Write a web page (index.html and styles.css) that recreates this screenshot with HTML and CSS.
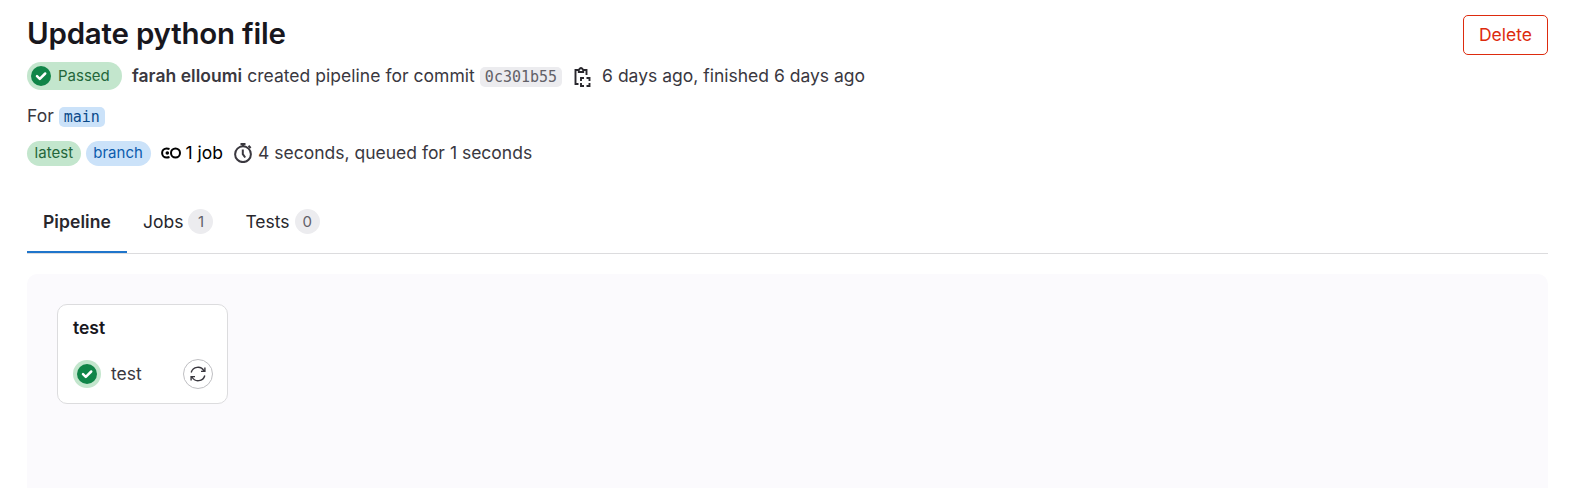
FILE: index.html
```html
<!DOCTYPE html>
<html lang="en">
<head>
<meta charset="utf-8">
<title>Update python file</title>
<link rel="stylesheet" href="styles.css">
</head>
<body>
<main class="page">
  <header class="header">
    <div class="details">
      <h1 class="title">Update python file</h1>
      <div class="meta">
        <span class="status"><svg class="check" viewBox="0 0 20 20"><circle cx="10" cy="10" r="10" fill="#108548"/><path d="M6 10.200l2.800 2.700 5.400-5.400" fill="none" stroke="#fff" stroke-width="2.500" stroke-linecap="round" stroke-linejoin="round"/></svg><span class="status-text">Passed</span></span>
        <span class="created"><strong>farah elloumi</strong> created pipeline for commit</span>
        <code class="sha">0c301b55</code>
        <svg class="copy" viewBox="0 0 20 20" fill="none" stroke="#28272d" stroke-width="1.900"><path d="M6.500 17H3.500V3H6.500M11.500 3H14.500V8"/><path d="M6.800 5V2.800L8 1.500q1-1 2 0L11.200 2.800V5z"/><path d="M9 14V11h3M14.500 11H17.500v3M17.500 16V19h-3M12 19H9v-3"/></svg>
        <span class="when">6 days ago, finished 6 days ago</span>
      </div>
      <div class="ref"><span>For</span><code class="branch-name">main</code></div>
      <div class="stats">
        <span class="badge green">latest</span>
        <span class="badge blue">branch</span>
        <svg class="jobs-icon" viewBox="0 0 20 20" fill="none" stroke="#000" stroke-width="2"><path d="M8.500 6Q7 5.500 5.600 5.500A4.500 4.500 0 0 0 5.600 14.500Q7 14.500 8.500 14"/><circle cx="14.500" cy="10" r="4.500"/><circle cx="6.300" cy="10" r="1.800" fill="#000" stroke="none"/></svg>
        <span class="jobs-count">1 job</span>
        <svg class="timer" viewBox="0 0 20 20" fill="none" stroke="#3a383f" stroke-width="2"><circle cx="10" cy="11.200" r="7.900"/><path d="M9.800 6.500v4.700l2.400 3.300"/><path d="M7.500 1.200h5" stroke-width="2.400"/><path d="M10 1.200v2.500M15.500 2.800l2.200 2.200"/></svg>
        <span>4 seconds, queued for 1 seconds</span>
      </div>
    </div>
    <button class="delete">Delete</button>
  </header>
  <nav class="tabs">
    <a class="tab active">Pipeline</a>
    <a class="tab">Jobs<span class="count">1</span></a>
    <a class="tab">Tests<span class="count">0</span></a>
  </nav>
  <section class="graph">
    <div class="stage">
      <h2 class="stage-name">test</h2>
      <div class="job">
        <span class="job-status"><svg class="check" viewBox="0 0 20 20"><circle cx="10" cy="10" r="10" fill="#108548"/><path d="M6 10.200l2.800 2.700 5.400-5.400" fill="none" stroke="#fff" stroke-width="2.500" stroke-linecap="round" stroke-linejoin="round"/></svg></span>
        <span class="job-name">test</span>
        <button class="retry" aria-label="Run again"><svg viewBox="0 0 16 16" fill="none" stroke="#3a383f" stroke-width="1.400"><path d="M1.200 6.500a6.900 6.900 0 0 1 12.800-1.500M14.800 9.500A6.900 6.900 0 0 1 2 11M14.900 1.500V5.400H11M1.100 14.500v-3.900h3.900"/></svg></button>
      </div>
    </div>
  </section>
</main>
</body>
</html>
```
FILE: styles.css
```css
* { box-sizing: border-box; }
body {
  margin: 0;
  height: 488px;
  overflow: hidden;
  background: #fff;
  color: #3a383f;
  font: 17.5px/25px Inter, sans-serif;
}
svg { display: block; flex: none; }
.page { display: flex; flex-direction: column; height: 488px; padding: 15px 29px 0 27px; white-space: nowrap; }
.header { display: flex; flex: none; justify-content: space-between; align-items: flex-start; }
.title {
  margin: 0;
  font-size: 29.5px;
  line-height: 37px;
  font-weight: 600;
  letter-spacing: -0.22px;
  color: #18171d;
}
.meta { display: flex; align-items: center; height: 28px; margin-top: 10px; }
.status {
  display: flex;
  align-items: center;
  width: 95px;
  height: 28px;
  padding-left: 4px;
  border-radius: 14px;
  background: #c3e6cd;
  color: #24663b;
  font-size: 15px;
}
.check { width: 20px; height: 20px; }
.status-text { margin-left: 7px; padding-bottom: 1px; }
.created { margin-left: 10px; padding-bottom: 2px; letter-spacing: 0.035px; }
strong { font-weight: 600; }
code { height: 20px; padding: 0 5px; border-radius: 5px; font: 15px/21px "DejaVu Sans Mono", monospace; }
.sha { margin: 2px 0 0 5px; background: #ececef; color: #626168; }
.copy { width: 20px; height: 20px; margin: 2px 0 0 10px; }
.when { margin-left: 10px; padding-bottom: 2px; }
.ref { display: flex; align-items: center; height: 25px; margin-top: 13px; }
.branch-name { margin: 2px 0 0 5px; background: #cbe2f9; color: #0b4a8a; }
.stats { display: flex; align-items: center; height: 25px; margin-top: 13px; }
.stats > span { padding-bottom: 3px; }
.stats .badge { height: 25px; padding: 0 7.5px; border-radius: 13px; font-size: 15px; line-height: 24px; letter-spacing: 0.05px; }
.green { background: #c3e6cd; color: #24663b; }
.blue { background: #cbe2f9; color: #0b5cad; margin-left: 5px; }
.jobs-icon { width: 20px; height: 20px; margin: 0 0 2px 10px; }
.jobs-count { margin-left: 5px; color: #000; }
.timer { width: 20px; height: 20px; margin: 0 5px 2px 10px; }
.delete {
  width: 85px;
  height: 40px;
  padding: 0 0 2px;
  border: 1px solid #dd2b0e;
  border-radius: 5px;
  background: #fff;
  color: #dd2b0e;
  font: inherit;
}
.tabs { display: flex; flex: none; height: 59px; margin-top: 29px; border-bottom: 1px solid #dcdcde; }
.tab { display: flex; align-items: center; height: 58px; padding: 0 16px 5px; color: #28272d; }
.active { width: 100px; font-weight: 600; padding-bottom: 3px; letter-spacing: 0.08px; border-bottom: 2px solid #1f75cb; }
.count {
  min-width: 25px;
  height: 25px;
  margin-left: 5px;
  border-radius: 13px;
  background: #ececef;
  color: #626168;
  font-size: 15px;
  text-align: center;
}
.graph { flex: 1; margin-top: 20px; padding: 30px; border-radius: 10px 10px 0 0; background: #fbfafd; }
.stage { width: 171px; height: 100px; padding: 10px 14px 0 15px; border: 1px solid #dcdcde; border-radius: 10px; background: #fff; }
.stage-name { margin: 0; font-size: 17.5px; line-height: 25px; font-weight: 600; color: #18171d; }
.job { display: flex; align-items: center; height: 30px; margin-top: 19px; }
.job-status { padding: 4px; border-radius: 14px; background: #c3e6cd; }
.job-name { flex: 1; margin-left: 10px; padding-bottom: 2px; }
.retry { display: flex; align-items: center; justify-content: center; width: 30px; height: 30px; padding: 0; border: 1px solid #bfbfc3; border-radius: 15px; background: #fff; }
.retry svg { width: 16px; height: 16px; }
```
